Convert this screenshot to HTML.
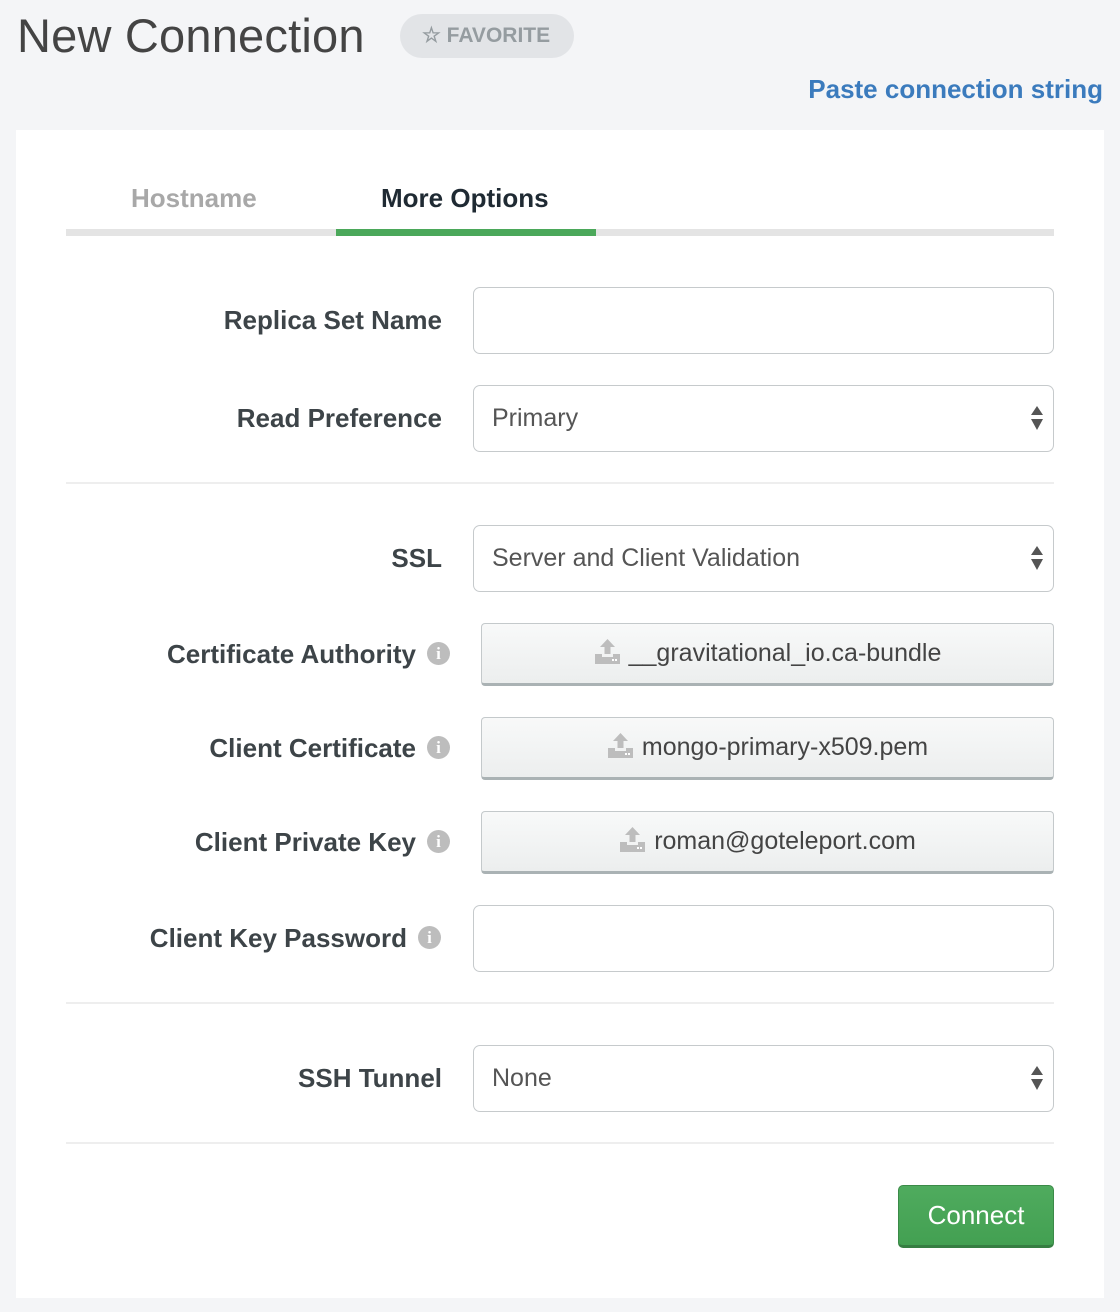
<!DOCTYPE html>
<html><head><meta charset="utf-8"><style>
*{box-sizing:border-box;margin:0;padding:0}
body{width:1120px;height:1312px;background:#f4f5f7;font-family:"Liberation Sans",sans-serif;position:relative;overflow:hidden}
.a{position:absolute}
.title{left:17px;top:8px;font-size:47px;color:#444;letter-spacing:0.2px}
.fav{left:400px;top:14px;width:174px;height:44px;border-radius:22px;background:#e2e4e7;color:#959ca0;font-size:21px;font-weight:bold;line-height:44px;padding-left:22px}
.paste{right:17px;top:74px;font-size:26px;color:#3b7bbd;font-weight:bold}
.card{left:16px;top:130px;width:1088px;height:1168px;background:#fff}
.tab{top:183px;font-size:26px;font-weight:bold}
.lbl{font-size:26px;font-weight:bold;color:#3d4448;text-align:right;width:422px;left:20px}
.in{left:473px;width:581px;height:67px;border:1.5px solid #c6cacc;border-radius:7px;background:#fff;font-size:25px;color:#555;padding-left:18px;line-height:64px}
.btn{left:481px;width:573px;height:63px;border:1.5px solid #c4c9cb;border-bottom:3px solid #aab2b4;border-radius:4px;background:linear-gradient(#f8f9f9,#eceeee);font-size:25px;color:#444;text-align:center;line-height:59px}
.hr{left:66px;width:988px;height:2px;background:#eeeeee}
.arr{position:absolute;right:9px;top:20px}
.info{position:absolute;width:23px;height:23px;border-radius:50%;background:#bdbdbd;color:#fff;font-size:17px;font-weight:bold;text-align:center;line-height:23px;font-family:"Liberation Serif",serif}
</style></head><body>
<div class="a title">New Connection</div>
<div class="a fav">☆ FAVORITE</div>
<div class="a paste">Paste connection string</div>
<div class="a card"></div>
<div class="a tab" style="left:131px;color:#a8a8a8">Hostname</div>
<div class="a tab" style="left:381px;color:#1f2a33">More Options</div>
<div class="a" style="left:66px;top:229px;width:988px;height:7px;background:#e4e4e4"></div>
<div class="a" style="left:336px;top:229px;width:260px;height:7px;background:#4ba85a"></div>

<div class="a lbl" style="top:305px">Replica Set Name</div>
<div class="a in" style="top:287px"></div>
<div class="a lbl" style="top:403px">Read Preference</div>
<div class="a in" style="top:385px">Primary<svg class="arr" width="14" height="26" viewBox="0 0 14 26"><path d="M7 0L13 9H1z M1 13H13L7 24z" fill="#555"/></svg></div>
<div class="a hr" style="top:482px"></div>
<div class="a lbl" style="top:543px">SSL</div>
<div class="a in" style="top:525px">Server and Client Validation<svg class="arr" width="14" height="26" viewBox="0 0 14 26"><path d="M7 0L13 9H1z M1 13H13L7 24z" fill="#555"/></svg></div>

<div class="a lbl" style="top:639px;width:396px">Certificate Authority</div><div class="info" style="left:427px;top:642px">i</div>
<div class="a btn" style="top:623px"><svg width="27" height="26" viewBox="0 0 27 26" style="vertical-align:-3px;margin-right:8px"><path d="M13.5 1L21 9H16.5V16H10.5V9H6z M1 16H8V19H19V16H26V26H1z" fill="#bdbdbd"/><rect x="18" y="21" width="2" height="2" fill="#fff"/><rect x="21" y="21" width="2" height="2" fill="#fff"/></svg>__gravitational_io.ca-bundle</div>
<div class="a lbl" style="top:733px;width:396px">Client Certificate</div><div class="info" style="left:427px;top:736px">i</div>
<div class="a btn" style="top:717px"><svg width="27" height="26" viewBox="0 0 27 26" style="vertical-align:-3px;margin-right:8px"><path d="M13.5 1L21 9H16.5V16H10.5V9H6z M1 16H8V19H19V16H26V26H1z" fill="#bdbdbd"/><rect x="18" y="21" width="2" height="2" fill="#fff"/><rect x="21" y="21" width="2" height="2" fill="#fff"/></svg>mongo-primary-x509.pem</div>
<div class="a lbl" style="top:827px;width:396px">Client Private Key</div><div class="info" style="left:427px;top:830px">i</div>
<div class="a btn" style="top:811px"><svg width="27" height="26" viewBox="0 0 27 26" style="vertical-align:-3px;margin-right:8px"><path d="M13.5 1L21 9H16.5V16H10.5V9H6z M1 16H8V19H19V16H26V26H1z" fill="#bdbdbd"/><rect x="18" y="21" width="2" height="2" fill="#fff"/><rect x="21" y="21" width="2" height="2" fill="#fff"/></svg>roman@goteleport.com</div>
<div class="a lbl" style="top:923px;width:387px">Client Key Password</div><div class="info" style="left:418px;top:926px">i</div>
<div class="a in" style="top:905px"></div>
<div class="a hr" style="top:1002px"></div>
<div class="a lbl" style="top:1063px">SSH Tunnel</div>
<div class="a in" style="top:1045px">None<svg class="arr" width="14" height="26" viewBox="0 0 14 26"><path d="M7 0L13 9H1z M1 13H13L7 24z" fill="#555"/></svg></div>
<div class="a hr" style="top:1142px"></div>
<div class="a" style="left:898px;top:1185px;width:156px;height:63px;border-radius:5px;background:linear-gradient(#4fab5e,#43a052);border:1.5px solid #3b8a48;border-bottom:3px solid #367e42;color:#fff;font-size:26px;text-align:center;line-height:58px">Connect</div>
</body></html>
